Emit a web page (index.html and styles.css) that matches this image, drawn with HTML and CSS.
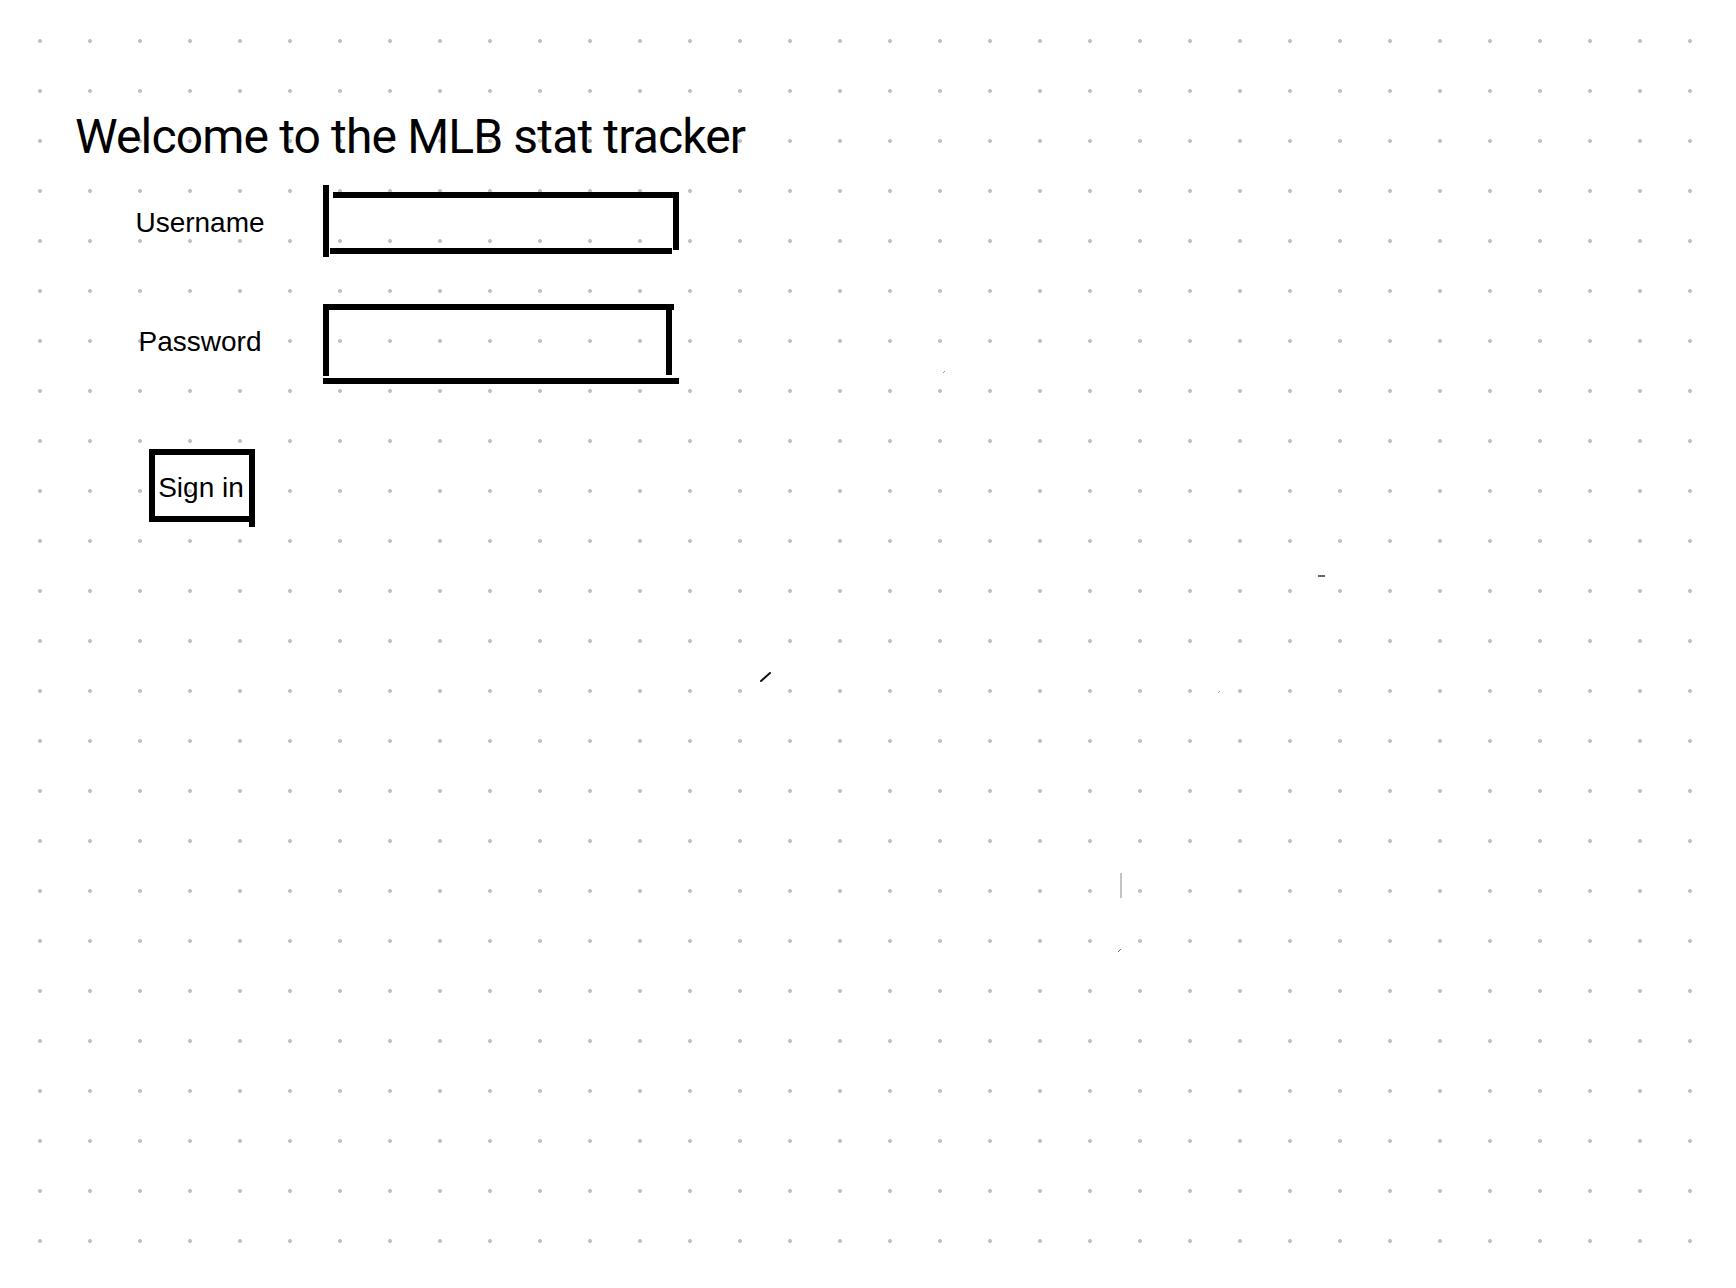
FILE: index.html
```html
<!DOCTYPE html>
<html lang="en">
<head>
<meta charset="utf-8">
<title>MLB stat tracker</title>
<link rel="stylesheet" href="styles.css">
</head>
<body>
<main class="page">
  <h1 class="title">Welcome to the MLB stat tracker</h1>
  <form class="login" onsubmit="return false">
    <label class="field-label field-label--user" for="username">Username</label>
    <div class="sketch-input sketch-input--user">
      <input id="username" type="text" autocomplete="off">
      <svg class="strokes" viewBox="0 0 356 72" width="356" height="72" aria-hidden="true">
        <rect x="0" y="0" width="6" height="72"/>
        <rect x="10" y="7" width="346" height="6"/>
        <rect x="350" y="7" width="6" height="58"/>
        <rect x="7" y="63" width="342" height="6"/>
      </svg>
    </div>

    <label class="field-label field-label--pass" for="password">Password</label>
    <div class="sketch-input sketch-input--pass">
      <input id="password" type="password">
      <svg class="strokes" viewBox="0 0 356 80" width="356" height="80" aria-hidden="true">
        <rect x="0" y="0" width="351" height="6"/>
        <rect x="0" y="0" width="6" height="72"/>
        <rect x="343" y="5" width="6" height="66"/>
        <rect x="0" y="74" width="356" height="6"/>
      </svg>
    </div>

    <button class="sign-in" type="submit">
      <span class="sign-in-text">Sign in</span>
      <svg class="strokes" viewBox="0 0 107 78" width="107" height="78" aria-hidden="true">
        <rect x="0" y="0" width="105" height="6"/>
        <rect x="0" y="0" width="6" height="72"/>
        <rect x="100" y="0" width="6" height="78"/>
        <rect x="0" y="67" width="103" height="6"/>
      </svg>
    </button>
  </form>
</main>

<svg class="stray-marks" width="1736" height="1288" viewBox="0 0 1736 1288" aria-hidden="true">
  <path d="M761 681 L770 673" stroke="#111" stroke-width="2" stroke-linecap="round" fill="none"/>
  <path d="M1121 873 L1121 898" stroke="#8a8a8a" stroke-width="1" fill="none"/>
  <path d="M1318 576 L1325 576" stroke="#333" stroke-width="1.5" fill="none"/>
  <path d="M943 373 L945 371" stroke="#999" stroke-width="1" fill="none"/>
  <path d="M1218 693 L1220 691" stroke="#aaa" stroke-width="1" fill="none"/>
  <path d="M1118 952 L1121 949" stroke="#777" stroke-width="1" fill="none"/>
</svg>
</body>
</html>
```

FILE: styles.css
```css
html, body {
  margin: 0;
  padding: 0;
}

body {
  min-height: 1288px;
  position: relative;
  background-color: #ffffff;
  background-image: radial-gradient(circle, #c2c2c2 1.6px, rgba(194,194,194,0) 2.3px);
  background-size: 50px 50px;
  background-position: 15px 16px;
  font-family: "Liberation Sans", Arial, sans-serif;
  color: #000;
}

.page {
  padding: 109px 0 0 75px;
}

.title {
  margin: 0;
  font-family: Roboto, "Liberation Sans", Arial, sans-serif;
  font-size: 48px;
  line-height: 56px;
  font-weight: 400;
  letter-spacing: -0.85px;
}

.login {
  margin: 20px 0 0 25px;
  display: grid;
  grid-template-columns: 200px 356px;
  grid-template-rows: 72px 80px auto;
  column-gap: 23px;
  row-gap: 47px;
  align-items: center;
}

.field-label {
  font-size: 28px;
  line-height: 32px;
  text-align: center;
}

.field-label--user {
  margin-top: 4px;
}

.field-label--pass {
  margin-bottom: 4px;
}

.sketch-input {
  position: relative;
  width: 356px;
}

.sketch-input--user { height: 72px; }
.sketch-input--pass { height: 80px; }

.sketch-input input {
  box-sizing: border-box;
  width: 100%;
  height: 100%;
  border: none;
  outline: none;
  background: transparent;
  padding: 0 16px;
  font: inherit;
  font-size: 26px;
}

.strokes {
  position: absolute;
  left: 0;
  top: 0;
  fill: #000;
  pointer-events: none;
}

.sign-in {
  position: relative;
  grid-column: 1;
  justify-self: start;
  margin: 18px 0 0 49px;
  width: 107px;
  height: 78px;
  padding: 0 3px 1px 0;
  border: none;
  background: transparent;
  display: flex;
  align-items: center;
  justify-content: center;
  font-family: "Liberation Sans", Arial, sans-serif;
  font-size: 28px;
  line-height: 32px;
  color: #000;
  cursor: pointer;
}

.stray-marks {
  position: absolute;
  left: 0;
  top: 0;
  pointer-events: none;
}
```
